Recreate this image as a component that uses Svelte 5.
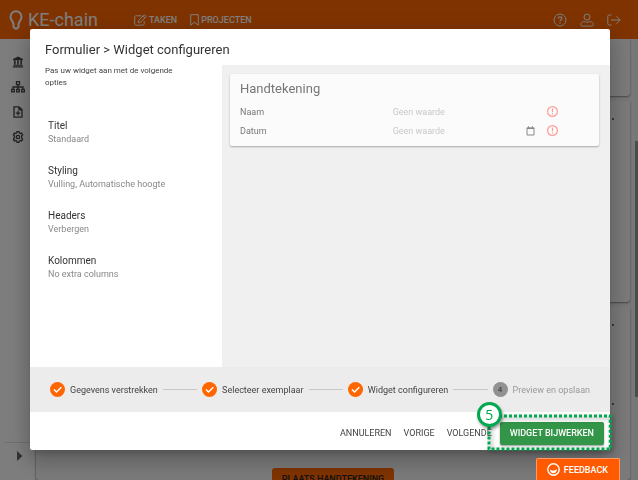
<script>
  const sections = [
    { title: 'Titel', value: 'Standaard' },
    { title: 'Styling', value: 'Vulling, Automatische hoogte' },
    { title: 'Headers', value: 'Verbergen' },
    { title: 'Kolommen', value: 'No extra columns' },
  ];

  const fields = [
    { id: 'naam', label: 'Naam', date: false },
    { id: 'datum', label: 'Datum', date: true },
  ];

  const steps = ['Gegevens verstrekken', 'Selecteer exemplaar', 'Widget configureren', 'Preview en opslaan'];

  let activeStep = $state(3);
  let values = $state({ naam: '', datum: '' });
</script>

<div class="page">
  <header class="topbar">
    <a class="brand" href="#home">
      <svg width="14" height="20" viewBox="0 0 14 20">
        <path d="M4.5 14.5C4.5 11.5 1.5 10.5 1.5 6.8a5.5 5.5 0 0 1 11 0c0 3.7-3 4.7-3 7.7M4.5 14.5v2.3L6 18.6h2l1.5-1.8v-2.3" />
      </svg>
      <span>KE-chain</span>
    </a>
    <nav>
      <a href="#taken">
        <svg width="13" height="12" viewBox="0 0 13 12">
          <path d="M7.5 1.8H2.2C1.3 1.8.7 2.4.7 3.2v6.6c0 .8.6 1.4 1.5 1.4h6.6c.8 0 1.4-.6 1.4-1.4V7M10.4.7l1.9 1.9-5.8 5.6-2.3.5.5-2.3zM9 2.1 10.900 4" />
        </svg>
        TAKEN
      </a>
      <a href="#projecten">
        <svg width="9" height="12" viewBox="0 0 9 12"><path d="M.7.7h7.600v10.500L4.500 8.200.7 11.200z" /></svg>
        PROJECTEN
      </a>
    </nav>
    <div class="tools">
      <button aria-label="Help">
        <svg width="14" height="14" viewBox="0 0 14 14">
          <circle cx="7" cy="7" r="6" />
          <path d="M5.200 5.600c0-2.400 3.700-2.300 3.700 0 0 1.400-1.900 1.300-1.900 2.600M7 9.500v1.300" stroke-width="1.300" />
        </svg>
      </button>
      <button aria-label="Profiel">
        <svg width="14" height="14" viewBox="0 0 14 14">
          <circle cx="7" cy="4" r="3" />
          <path d="M3.800 8.500C2 8.800.7 10 .7 11.600c0 1 .4 1.500 1.200 1.500h10.200c.8 0 1.200-.5 1.200-1.500 0-1.600-1.300-2.800-3.100-3.100-2 .8-4.400.8-6.400 0z" />
        </svg>
      </button>
      <button aria-label="Uitloggen">
        <svg width="14" height="12" viewBox="0 0 14 12">
          <path d="M4.500 1H2.200C1.300 1 .8 1.500.8 2.300v7.400c0 .8.5 1.300 1.400 1.300h2.300M4 6h9M9.500 2.200 13.200 6 9.500 9.800" />
        </svg>
      </button>
    </div>
  </header>

  <div class="body">
    <aside>
      <a href="#organisatie" aria-label="Organisatie">
        <svg width="12" height="12" viewBox="0 0 12 12">
          <path d="M6 .5 11 3v1.200H1V3zM2 4.500h1.600v4H2zm3.200 0h1.600v4H5.200zm3.200 0H10v4H8.400zM1.500 8.800h9v.9h-9zM.8 10.200h10.400v1.200H.8z" />
        </svg>
      </a>
      <a href="#structuur" aria-label="Structuur">
        <svg class="line" width="14" height="12" viewBox="0 0 14 12">
          <path d="M5.500.7h3v3h-3zM.7 8.300h2.600v2.600H.7zM5.700 8.300h2.600v2.600H5.700zM10.700 8.300h2.600v2.600h-2.600zM7 3.700v4.600M2 8.300V6h10v2.300" />
        </svg>
      </a>
      <a href="#document" aria-label="Document toevoegen">
        <svg class="line" width="10" height="12" viewBox="0 0 10 12">
          <path d="M1 .8h5L9 3.600v7.600H1zM6 .8v3h3M5 5v4.500M2.800 7.200h4.400" />
        </svg>
      </a>
      <a href="#instellingen" aria-label="Instellingen">
        <svg class="line" width="12" height="12" viewBox="0 0 12 12">
          <path d="M4.700 1.900 5 .7h2l.3 1.200 1.100.6 1.200-.4 1 1.800-.9.900v2.400l.9.900-1 1.800-1.200-.4-1.100.6L7 11.300H5l-.3-1.200-1.100-.6-1.200.4-1-1.800.9-.900V4.800l-.9-.900 1-1.800 1.200.4z" />
          <circle cx="6" cy="6" r="1.700" />
        </svg>
      </a>
      <button class="expand" aria-label="Menu uitklappen">
        <svg width="6" height="10" viewBox="0 0 6 10"><path d="M0 0l5.500 5L0 10z" /></svg>
      </button>
    </aside>
    <main>
      <section class="tile first"></section>
      <section class="tile second"><i></i></section>
      <section class="tile third">
        <i></i>
        <i></i>
        <button class="sign">PLAATS HANDTEKENING</button>
      </section>
    </main>
    <div class="track"><div class="thumb"></div></div>
  </div>
</div>

<div class="backdrop">
  <div class="dialog" role="dialog" aria-modal="true" aria-labelledby="dialog-title">
    <h1 id="dialog-title">Formulier &gt; Widget configureren</h1>
    <div class="content">
      <div class="options">
        <p>Pas uw widget aan met de volgende opties</p>
        {#each sections as section}
          <button class="option">
            <strong>{section.title}</strong>
            <span>{section.value}</span>
          </button>
        {/each}
      </div>
      <div class="preview">
        <form class="card">
          <h2>Handtekening</h2>
          {#each fields as field (field.id)}
            <div class="field">
              <label for={field.id}>{field.label}</label>
              <input id={field.id} type="text" placeholder="Geen waarde" bind:value={values[field.id]} />
              {#if field.date}
                <svg class="calendar" width="9" height="10" viewBox="0 0 9 10">
                  <path d="M1 1.800h7v7.200H1zM1 2.500h7M2.500.3v1.500M6.500.3v1.500" />
                </svg>
              {/if}
              <svg class="required" width="11" height="11" viewBox="0 0 11 11">
                <circle cx="5.500" cy="5.500" r="4.900" />
                <path d="M5.500 2.500v3.700M5.500 7.200v1.400" />
              </svg>
            </div>
          {/each}
        </form>
      </div>
    </div>

    <ol class="stepper">
      {#each steps as step, i}
        {#if i > 0}
          <li class="connector" aria-hidden="true"></li>
        {/if}
        <li class="step" class:done={i < activeStep}>
          <span class="dot">
            {#if i < activeStep}
              <svg width="15" height="15" viewBox="0 0 15 15"><path d="M4 7.500 6.500 10 11.300 5.200" /></svg>
            {:else}
              {i + 1}
            {/if}
          </span>
          {step}
        </li>
      {/each}
    </ol>

    <div class="actions">
      <button>ANNULEREN</button>
      <button onclick={() => (activeStep = Math.max(0, activeStep - 1))}>VORIGE</button>
      <button onclick={() => (activeStep = Math.min(3, activeStep + 1))}>VOLGENDE</button>
      <div class="callout">
        <button class="update">WIDGET BIJWERKEN</button>
        <svg class="outline"><rect x="2" y="2" width="100%" height="100%" /></svg>
        <span class="number">5</span>
      </div>
    </div>
  </div>
</div>

<button class="feedback">
  <svg width="13" height="13" viewBox="0 0 13 13">
    <circle cx="6.500" cy="6.500" r="5.700" />
    <path class="smile" d="M3 6.800c1.800 1.200 4.800 1 6.800-.800.3 2.400-1.200 4.300-3.300 4.300S3 8.800 3 6.800z" />
  </svg>
  FEEDBACK
</button>

<style>
  :global(body) {
    font-family: Roboto, sans-serif;
    background: #f0f0f0;
    overflow: hidden;
  }

  button {
    padding: 0;
    border: none;
    background: none;
    font-family: inherit;
    cursor: pointer;
  }

  a {
    color: inherit;
    text-decoration: none;
  }

  svg {
    display: block;
    flex: none;
    fill: none;
    stroke: currentColor;
  }

  .page {
    display: flex;
    flex-direction: column;
    height: 100vh;
  }

  .topbar {
    display: flex;
    align-items: center;
    height: 39px;
    padding: 0 17px 0 9px;
    background: #ff6600;
    color: #fff;
  }

  .brand {
    display: flex;
    align-items: center;
    gap: 5px;
    width: 125px;
    font-size: 18px;
  }

  .brand svg {
    stroke-width: 2;
  }

  nav {
    display: flex;
    gap: 13px;
    font-size: 9px;
    font-weight: 500;
  }

  nav a {
    display: flex;
    align-items: center;
    gap: 2px;
  }

  .tools {
    display: flex;
    align-items: center;
    gap: 13px;
    margin-left: auto;
  }

  .tools button {
    color: #fff;
  }

  .body {
    display: flex;
    flex: 1;
    min-height: 0;
  }

  aside {
    display: flex;
    flex-direction: column;
    align-items: center;
    gap: 13px;
    box-sizing: border-box;
    width: 36px;
    padding: 17px 0 0;
    background: #fafafa;
    border-right: 1px solid #ddd;
    color: #444;
  }

  aside svg {
    fill: currentColor;
    stroke: none;
  }

  aside svg.line {
    fill: none;
    stroke: currentColor;
    stroke-width: 1.3;
  }

  .expand {
    display: flex;
    justify-content: center;
    align-items: center;
    align-self: stretch;
    height: 38px;
    margin: auto 0 0 5px;
    padding: 0 0 11px;
    border-top: 1px solid #ddd;
    color: #666;
  }

  main {
    display: flex;
    flex: 1;
    flex-direction: column;
    gap: 5px;
    padding-right: 5px;
  }

  .tile {
    border-radius: 0 0 3px 3px;
    background: #f5f5f5;
    box-shadow: 0 1px 2px #888;
  }

  .tile i {
    display: block;
    width: 2px;
    height: 2px;
    margin: 17px 16px 77px auto;
    border-radius: 1px;
    background: #444;
  }

  .first {
    height: 57px;
  }

  .second {
    height: 201px;
    overflow: hidden;
  }

  .third {
    flex: 1;
    text-align: center;
    overflow: hidden;
  }

  .third i + i {
    margin-bottom: 62px;
  }

  .sign {
    height: 22px;
    padding: 0 10px;
    border-radius: 3px;
    background: #ff6600;
    font-size: 9px;
    font-weight: 500;
    color: #222;
  }

  .track {
    width: 3px;
    background: #ececec;
  }

  .thumb {
    height: 58%;
    margin-top: 102px;
    background: #999;
  }

  .backdrop {
    position: fixed;
    inset: 0;
    box-sizing: border-box;
    padding: 29px 28px 30px 30px;
    background: rgba(0, 0, 0, 0.5);
  }

  .dialog {
    display: flex;
    flex-direction: column;
    height: 100%;
    border-radius: 2px;
    background: #fff;
    box-shadow: 0 6px 8px -4px rgba(0, 0, 0, 0.2), 0 12px 19px 2px rgba(0, 0, 0, 0.14), 0 5px 23px 4px rgba(0, 0, 0, 0.12);
  }

  h1,
  h2 {
    margin: 0;
    font-size: 13px;
    font-weight: 400;
  }

  h1 {
    padding: 13px 15px 7px;
    line-height: 16px;
    color: #333;
  }

  .content {
    display: flex;
    flex: 1;
    min-height: 0;
  }

  .options {
    box-sizing: border-box;
    width: 192px;
    padding: 0 15px;
  }

  p {
    width: 144px;
    margin: 0 0 30px;
    font-size: 8px;
    line-height: 12px;
    color: #444;
  }

  .option {
    display: block;
    margin: 0 0 18px 3px;
    text-align: left;
    color: #888;
  }

  .option strong,
  .option span {
    display: block;
    font-size: 9px;
    font-weight: 400;
    line-height: 13px;
  }

  .option strong {
    font-size: 10px;
    line-height: 14px;
    color: #333;
  }

  .preview {
    flex: 1;
    padding: 9px 11px 0 8px;
    background: #f0f0f0;
  }

  .card {
    padding: 7px 10px 6px;
    border-radius: 2px;
    background: #fbfbfb;
    box-shadow: 0 1px 2px rgba(0, 0, 0, 0.3);
  }

  h2 {
    margin-bottom: 5px;
    line-height: 16px;
    color: #777;
  }

  .field {
    display: flex;
    align-items: center;
    height: 19px;
    padding-right: 31px;
    font-size: 9px;
    color: #777;
  }

  label {
    width: 48%;
  }

  .field input {
    flex: 1;
    min-width: 0;
    padding: 0;
    border: none;
    outline: none;
    background: none;
    font: inherit;
  }

  .field input::placeholder {
    color: #c8c8c8;
  }

  .calendar {
    margin-right: 12px;
    color: #888;
  }

  .required {
    color: #ff9c96;
    stroke-width: 1.2;
  }

  .stepper {
    display: flex;
    align-items: center;
    gap: 5px;
    height: 45px;
    margin: 0;
    padding: 0 20px;
    background: #ececec;
    list-style: none;
    font-size: 9px;
    color: #999;
  }

  .connector {
    flex: 1;
    height: 1px;
    background: #c8c8c8;
  }

  .step {
    display: flex;
    align-items: center;
    gap: 5px;
  }

  .dot {
    width: 15px;
    border-radius: 50%;
    background: #919191;
    font-size: 8px;
    line-height: 15px;
    text-align: center;
    color: #333;
  }

  .done {
    color: #444;
  }

  .done .dot {
    background: #ff6600;
    color: #fff;
  }

  .dot svg {
    stroke-width: 1.5;
  }

  .actions {
    display: flex;
    justify-content: flex-end;
    align-items: center;
    gap: 12px;
    box-sizing: border-box;
    height: 38px;
    padding: 4px 6px 0;
  }

  .actions button {
    font-size: 9px;
    color: #444;
    white-space: nowrap;
  }

  .callout {
    position: relative;
    margin-left: -4px;
  }

  .actions .update {
    display: block;
    height: 23px;
    padding: 0 10px;
    border-radius: 2px;
    background: #339547;
    box-shadow: 0 1px 2px rgba(0, 0, 0, 0.4);
    font-weight: 500;
    color: #fff;
  }

  .outline {
    position: absolute;
    top: -8px;
    left: -13px;
    width: calc(100% + 17px);
    height: calc(100% + 10px);
    overflow: visible;
    pointer-events: none;
    filter: drop-shadow(2px 2px 2px rgba(0, 0, 0, 0.4));
  }

  .outline rect {
    stroke: #00a94f;
    stroke-width: 3;
    stroke-dasharray: 3 2;
  }

  .number {
    position: absolute;
    top: -20px;
    left: -23px;
    box-sizing: border-box;
    width: 25px;
    height: 25px;
    border: 3px solid #00a94f;
    border-radius: 50%;
    background: #fff;
    box-shadow: 1px 2px 3px rgba(0, 0, 0, 0.4);
    font-family: "Open Sans", sans-serif;
    font-size: 14px;
    line-height: 19px;
    text-align: center;
    color: #00a94f;
  }

  .feedback {
    position: fixed;
    right: 18px;
    bottom: 0;
    display: flex;
    align-items: center;
    gap: 4px;
    height: 22px;
    padding: 0 11px 0 10px;
    border: 1px solid #ff9a66;
    border-bottom: none;
    border-radius: 2px 2px 0 0;
    background: #ff5a00;
    font-size: 9px;
    font-weight: 500;
    color: #fff;
  }

  .feedback svg {
    stroke-width: 1.4;
  }

  .feedback .smile {
    fill: currentColor;
    stroke: none;
  }
</style>
